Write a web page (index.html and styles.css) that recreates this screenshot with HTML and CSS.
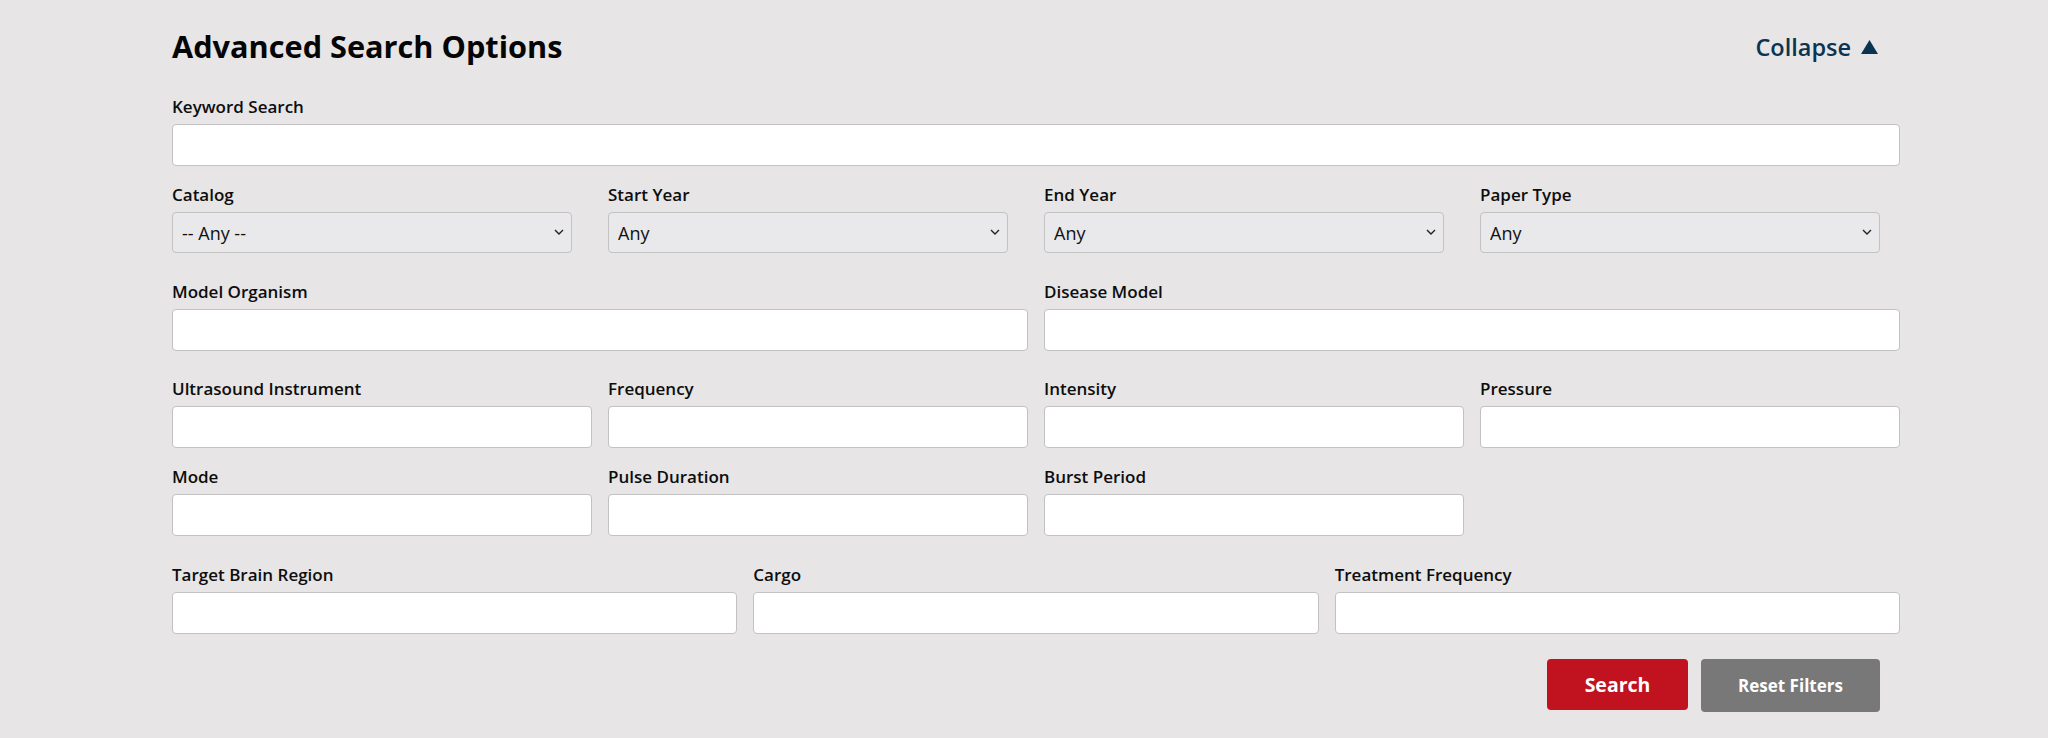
FILE: index.html
```html
<!DOCTYPE html>
<html>
  <head>
    <title>Advanced Search Options</title>
    <link rel="stylesheet" href="styles.css">
  </head>
  <body>
    <div class="panel">
      <div class="panel-head">
        <h2 class="panel-title">Advanced Search Options</h2>
        <a class="collapse-link" href="#">Collapse
          <svg class="collapse-icon" width="17" height="14" viewBox="0 0 17 14"><polygon points="8.5,0 17,14 0,14" fill="currentColor"/></svg>
        </a>
      </div>
      <form class="search-form">
        <div class="field">
          <label for="keyword">Keyword Search</label>
          <input type="text" id="keyword">
        </div>

        <div class="grid grid-4 row-selects">
          <div class="field">
            <label for="catalog">Catalog</label>
            <div class="select-wrap">
              <select id="catalog"><option>-- Any --</option></select>
              <svg class="chevron" width="10" height="7" viewBox="0 0 10 7"><polyline points="1,1 5,5 9,1" fill="none" stroke="#222" stroke-width="1.4"/></svg>
            </div>
          </div>
          <div class="field">
            <label for="start_year">Start Year</label>
            <div class="select-wrap">
              <select id="start_year"><option>Any</option></select>
              <svg class="chevron" width="10" height="7" viewBox="0 0 10 7"><polyline points="1,1 5,5 9,1" fill="none" stroke="#222" stroke-width="1.4"/></svg>
            </div>
          </div>
          <div class="field">
            <label for="end_year">End Year</label>
            <div class="select-wrap">
              <select id="end_year"><option>Any</option></select>
              <svg class="chevron" width="10" height="7" viewBox="0 0 10 7"><polyline points="1,1 5,5 9,1" fill="none" stroke="#222" stroke-width="1.4"/></svg>
            </div>
          </div>
          <div class="field">
            <label for="paper_type">Paper Type</label>
            <div class="select-wrap">
              <select id="paper_type"><option>Any</option></select>
              <svg class="chevron" width="10" height="7" viewBox="0 0 10 7"><polyline points="1,1 5,5 9,1" fill="none" stroke="#222" stroke-width="1.4"/></svg>
            </div>
          </div>
        </div>

        <div class="grid grid-2 row-model">
          <div class="field">
            <label for="organism">Model Organism</label>
            <input type="text" id="organism">
          </div>
          <div class="field">
            <label for="disease">Disease Model</label>
            <input type="text" id="disease">
          </div>
        </div>

        <div class="grid grid-4 row-params">
          <div class="field">
            <label for="instrument">Ultrasound Instrument</label>
            <input type="text" id="instrument">
          </div>
          <div class="field">
            <label for="frequency">Frequency</label>
            <input type="text" id="frequency">
          </div>
          <div class="field">
            <label for="intensity">Intensity</label>
            <input type="text" id="intensity">
          </div>
          <div class="field">
            <label for="pressure">Pressure</label>
            <input type="text" id="pressure">
          </div>
          <div class="field">
            <label for="mode">Mode</label>
            <input type="text" id="mode">
          </div>
          <div class="field">
            <label for="pulse">Pulse Duration</label>
            <input type="text" id="pulse">
          </div>
          <div class="field">
            <label for="burst">Burst Period</label>
            <input type="text" id="burst">
          </div>
        </div>

        <div class="grid grid-3 row-target">
          <div class="field">
            <label for="region">Target Brain Region</label>
            <input type="text" id="region">
          </div>
          <div class="field">
            <label for="cargo">Cargo</label>
            <input type="text" id="cargo">
          </div>
          <div class="field">
            <label for="treatment">Treatment Frequency</label>
            <input type="text" id="treatment">
          </div>
        </div>

        <div class="actions">
          <button type="button" class="btn btn-search">Search</button>
          <button type="reset" class="btn btn-reset">Reset Filters</button>
        </div>
      </form>
    </div>
  </body>
</html>
```

FILE: styles.css
```css
html, body {
  margin: 0;
  background-color: #e7e5e6;
  font-family: "Open Sans", Arial, sans-serif;
  color: #111;
}
.panel {
  width: 1708px;
  margin-left: 172px;
  padding-top: 28px;
}
.panel-head {
  display: flex;
  justify-content: space-between;
  align-items: center;
  height: 37px;
  margin-bottom: 30px;
}
.panel-title {
  margin: 0;
  font-size: 30.7px;
  line-height: 37px;
  font-weight: 700;
  color: #050505;
}
.collapse-link {
  display: flex;
  align-items: center;
  margin-right: 2px;
  font-size: 23.5px;
  font-weight: 600;
  line-height: 28px;
  color: #0b3452;
  text-decoration: none;
}
.collapse-icon {
  margin-left: 10px;
  margin-top: 1px;
}
.field label {
  display: block;
  font-size: 17px;
  font-weight: 600;
  line-height: 24px;
  margin-bottom: 5px;
  color: #0d0d0d;
}
input[type=text] {
  display: block;
  width: 100%;
  height: 40px;
  padding: 0 9px;
  margin: 0;
  border: 1px solid #c2c2c2;
  border-radius: 4px;
  background: #fff;
  box-sizing: content-box;
  font-family: inherit;
  font-size: 18px;
}
.select-wrap {
  position: relative;
}
select {
  display: block;
  width: 100%;
  height: 41px;
  padding: 0 30px 0 9px;
  margin: 0;
  border: 1px solid #c2c2c2;
  border-radius: 4px;
  background: #e9e8ea;
  box-sizing: border-box;
  -webkit-appearance: none;
  appearance: none;
  font-family: inherit;
  font-size: 18px;
  color: #111;
}
.chevron {
  position: absolute;
  right: 8px;
  top: 17px;
  pointer-events: none;
}
.grid {
  display: grid;
  column-gap: 36px;
}
.grid-4 {
  grid-template-columns: repeat(4, 1fr);
}
.grid-3 {
  grid-template-columns: repeat(3, 1fr);
}
.grid-2 {
  grid-template-columns: repeat(2, 1fr);
}
.row-selects {
  margin-top: 17px;
}
.row-model {
  margin-top: 27px;
}
.row-params {
  margin-top: 26px;
  row-gap: 17px;
}
.row-target {
  margin-top: 27px;
}
.actions {
  display: flex;
  justify-content: flex-end;
  align-items: flex-start;
  gap: 13px;
  margin-top: 25px;
}
.btn {
  height: 52px;
  border: none;
  border-radius: 4px;
  color: #fff;
  font-family: inherit;
  font-weight: 700;
  cursor: pointer;
}
.btn-search {
  width: 141px;
  height: 51px;
  font-size: 19.5px;
  background-color: #c1121f;
}
.btn-reset {
  width: 179px;
  height: 53px;
  font-size: 17px;
  background-color: #787878;
}
```
